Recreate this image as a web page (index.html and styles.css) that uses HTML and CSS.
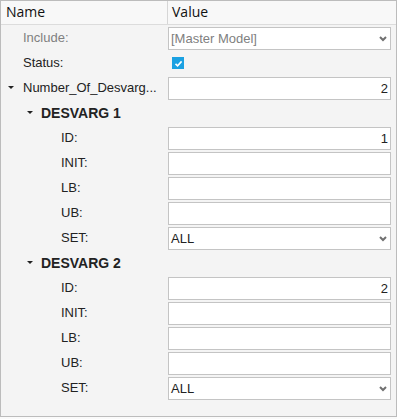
FILE: index.html
```html
<!DOCTYPE html>
<html lang="en">

<head>
    <meta charset="UTF-8">
    <title>Entity Editor</title>
    <link rel="stylesheet" href="styles.css">
</head>

<body>
    <div class="panel">
        <div class="head">
            <div class="head-cell name">Name</div>
            <div class="head-cell">Value</div>
        </div>

        <div class="row">
            <div class="label off lvl1">Include:</div>
            <div class="value">
                <div class="box select off">[Master Model]<svg class="chev" width="8" height="6" viewBox="0 0 8 6"><path d="M1 1 L4 4 L7 1" /></svg></div>
            </div>
        </div>
        <div class="row">
            <div class="label lvl1">Status:</div>
            <div class="value">
                <span class="check"><svg width="11" height="11" viewBox="0 0 11 11"><path d="M2.5 5.8 L4.6 7.8 L8.6 3.4" /></svg></span>
            </div>
        </div>
        <div class="row">
            <div class="label lvl0"><span class="tri"></span>Number_Of_Desvarg...</div>
            <div class="value">
                <div class="box num">2</div>
            </div>
        </div>

        <!-- grupos DESVARG -->
        <div id="grupos"></div>
    </div>

    <script>
        const grupos = [
            { nombre: 'DESVARG 1', id: 1 },
            { nombre: 'DESVARG 2', id: 2 }
        ];
        const chevron = '<svg class="chev" width="8" height="6" viewBox="0 0 8 6"><path d="M1 1 L4 4 L7 1" /></svg>';

        let miHTML = '';
        for (let i = 0; i < grupos.length; i++) {
            miHTML += `<div class="row">
                <div class="label lvl-group"><span class="tri"></span>${grupos[i].nombre}</div>
                <div class="value"></div>
            </div>
            <div class="row">
                <div class="label lvl2">ID:</div>
                <div class="value"><div class="box num">${grupos[i].id}</div></div>
            </div>
            <div class="row">
                <div class="label lvl2">INIT:</div>
                <div class="value"><div class="box"></div></div>
            </div>
            <div class="row">
                <div class="label lvl2">LB:</div>
                <div class="value"><div class="box"></div></div>
            </div>
            <div class="row">
                <div class="label lvl2">UB:</div>
                <div class="value"><div class="box"></div></div>
            </div>
            <div class="row">
                <div class="label lvl2">SET:</div>
                <div class="value"><div class="box select">ALL${chevron}</div></div>
            </div>`;
        }
        document.querySelector('#grupos').innerHTML = miHTML;
    </script>
</body>

</html>
```

FILE: styles.css
```css
:root {
    --borde: #bcbcbc;
    --fondo: #f4f4f4;
    --texto: #222;
}

body {
    margin: 0;
    background: #fafafa;
    font-family: "Liberation Sans", Arial, sans-serif;
    font-size: 13px;
    color: var(--texto);
}

.panel {
    width: 397px;
    height: 417px;
    box-sizing: border-box;
    border: 1px solid var(--borde);
    background: var(--fondo);
}

.head {
    display: grid;
    grid-template-columns: 167px 1fr;
    height: 24px;
    box-sizing: border-box;
    border-bottom: 1px solid #dcdcdc;
    background: #f8f8f8;
    font-family: "Open Sans", "Noto Sans", sans-serif;
    font-size: 14px;
    color: #111;
}

.head-cell {
    line-height: 22px;
    padding-left: 4px;
}

.head-cell.name {
    padding-left: 5px;
    border-right: 1px solid #d6d6d6;
}

.row {
    display: grid;
    grid-template-columns: 167px 1fr;
    height: 25px;
}

.label {
    display: flex;
    align-items: center;
    white-space: nowrap;
    overflow: hidden;
}

.lvl0 {
    padding-left: 7px;
}

.lvl1 {
    padding-left: 22px;
}

.lvl2 {
    padding-left: 60px;
}

.lvl-group {
    padding-left: 26px;
    font-weight: bold;
    font-size: 14px;
}

.lvl-group .tri {
    margin-right: 8px;
}

.off {
    color: #808080;
}

.tri {
    width: 0;
    height: 0;
    border-left: 3px solid transparent;
    border-right: 3px solid transparent;
    border-top: 3px solid #222;
    margin-right: 9px;
}

.value {
    padding-right: 5px;
    display: flex;
    align-items: flex-start;
}

.box {
    margin-top: 2px;
    height: 23px;
    width: 100%;
    box-sizing: border-box;
    border: 1px solid #c4c4c4;
    background: #fff;
    padding: 0 2px;
    line-height: 21px;
}

.num {
    text-align: right;
}

.select {
    display: flex;
    justify-content: space-between;
    align-items: center;
    padding-right: 3px;
}

.chev {
    fill: none;
    stroke: #707070;
    stroke-width: 2;
}

.check {
    margin: 7px 0 0 4px;
    width: 12px;
    height: 12px;
    background: #1ba1e2;
    display: flex;
    align-items: center;
    justify-content: center;
}

.check svg {
    fill: none;
    stroke: #fff;
    stroke-width: 1.6;
}
```
